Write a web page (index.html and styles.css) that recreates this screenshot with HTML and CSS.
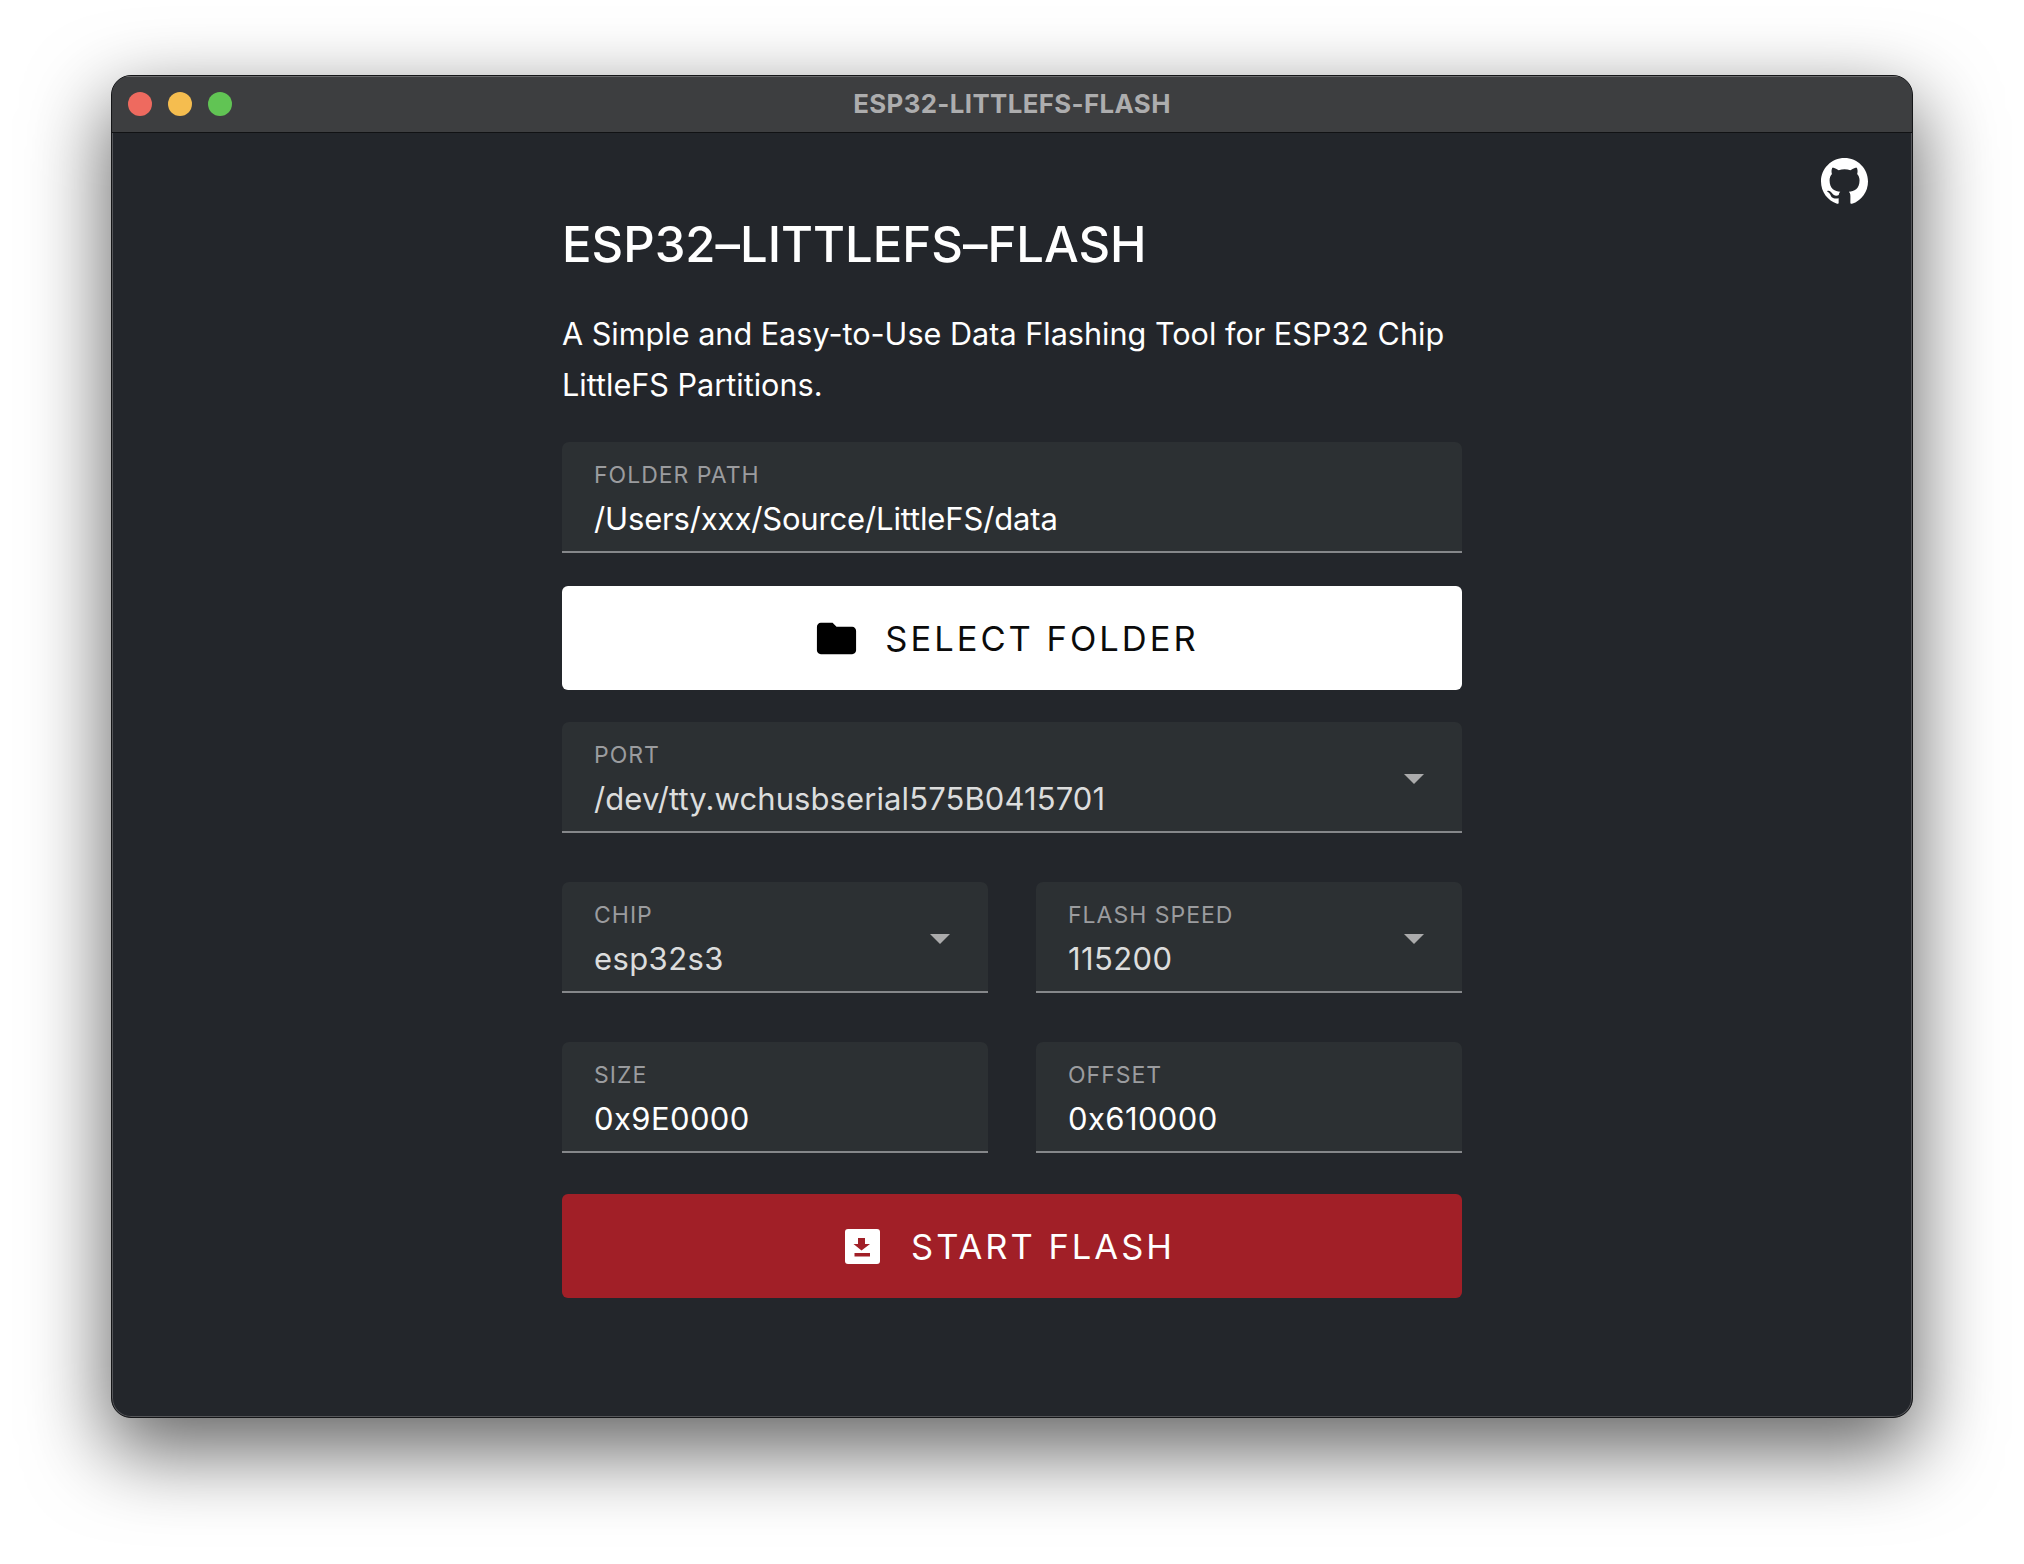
FILE: index.html
```html
<!DOCTYPE html>
<html lang="en">
<head>
    <meta charset="UTF-8">
    <meta name="viewport" content="width=device-width, initial-scale=1.0">
    <title>ESP32-LITTLEFS-FLASH</title>
    <link rel="stylesheet" href="styles.css">
</head>
<body>

    <div class="window">
        <div class="titlebar">
            <div class="lights">
                <span class="light red"></span>
                <span class="light yellow"></span>
                <span class="light green"></span>
            </div>
            <div class="window-title">ESP32-LITTLEFS-FLASH</div>
        </div>

        <div class="content">
            <a class="github" href="#">
                <svg viewBox="0 0 16 16" width="47" height="47" fill="#fff">
                    <path fill-rule="evenodd" d="M8 0C3.58 0 0 3.58 0 8c0 3.54 2.29 6.53 5.47 7.59.4.07.55-.17.55-.38 0-.19-.01-.82-.01-1.49-2.01.37-2.53-.49-2.69-.94-.09-.23-.48-.94-.82-1.13-.28-.15-.68-.52-.01-.53.63-.01 1.08.58 1.23.82.72 1.21 1.87.87 2.33.66.07-.52.28-.87.51-1.07-1.78-.2-3.64-.89-3.64-3.95 0-.87.31-1.59.82-2.15-.08-.2-.36-1.02.08-2.12 0 0 .67-.21 2.2.82.64-.18 1.32-.27 2-.27.68 0 1.36.09 2 .27 1.53-1.04 2.2-.82 2.2-.82.44 1.1.16 1.92.08 2.12.51.56.82 1.27.82 2.15 0 3.07-1.87 3.75-3.65 3.95.29.25.54.73.54 1.48 0 1.07-.01 1.93-.01 2.2 0 .21.15.46.55.38A8.013 8.013 0 0016 8c0-4.42-3.58-8-8-8z"/>
                </svg>
            </a>

            <div class="form">
                <h1>ESP32–LITTLEFS–FLASH</h1>
                <p class="intro">A Simple and Easy-to-Use Data Flashing Tool for ESP32 Chip LittleFS Partitions.</p>

                <div class="field folder">
                    <label>Folder Path</label>
                    <div class="value">/Users/xxx/Source/LittleFS/data</div>
                </div>

                <button class="btn btn-white">
                    <svg viewBox="0 0 24 24" width="47" height="47" fill="#000">
                        <path d="M10 4H4c-1.1 0-1.99.9-1.99 2L2 18c0 1.1.9 2 2 2h16c1.1 0 2-.9 2-2V8c0-1.1-.9-2-2-2h-8l-2-2z"/>
                    </svg>
                    Select Folder
                </button>

                <div class="field port select">
                    <label>Port</label>
                    <div class="value">/dev/tty.wchusbserial575B0415701</div>
                </div>

                <div class="row">
                    <div class="field select">
                        <label>Chip</label>
                        <div class="value">esp32s3</div>
                    </div>
                    <div class="field select">
                        <label>Flash Speed</label>
                        <div class="value">115200</div>
                    </div>
                </div>

                <div class="row">
                    <div class="field">
                        <label>Size</label>
                        <div class="value">0x9E0000</div>
                    </div>
                    <div class="field">
                        <label>Offset</label>
                        <div class="value">0x610000</div>
                    </div>
                </div>

                <button class="btn btn-red">
                    <svg viewBox="0 0 35 35" width="35" height="35">
                        <rect width="35" height="35" rx="3" fill="#fff"/>
                        <path d="M13 9h7v6h5l-8.500 6.500L8.500 15H13z" fill="#a11f27"/>
                        <rect x="9.500" y="24" width="15.500" height="3.500" fill="#a11f27"/>
                    </svg>
                    Start Flash
                </button>
            </div>
        </div>
    </div>

</body>
</html>
```

FILE: styles.css
```css
* {
    margin: 0;
    padding: 0;
    box-sizing: border-box;
    font-family: 'Inter', 'Liberation Sans', sans-serif;
}

body {
    width: 2024px;
    height: 1564px;
    padding: 75px 111px 0 111px;
    background: #fff;
    overflow: hidden;
}

.window {
    height: 1343px;
    border: 1px solid #151618;
    border-radius: 20px;
    background: #23262b;
    box-shadow: inset 0 0 0 1px #55565a, 0 30px 80px 4px rgba(0, 0, 0, 0.6);
    overflow: hidden;
}

.titlebar {
    display: flex;
    align-items: center;
    height: 57px;
    padding: 0 0 0 16px;
    background: #3d3e40;
    border-bottom: 1px solid #111214;
    box-shadow: inset 0 1px 0 #6a6a6c;
}

.lights {
    display: flex;
    gap: 16px;
}

.light {
    width: 24px;
    height: 24px;
    border-radius: 50%;
}

.red {
    background: #ee6a5f;
}

.yellow {
    background: #f5bd4f;
}

.green {
    background: #61c454;
}

.window-title {
    flex: 1;
    margin: -2px 0 0 -120px;
    text-align: center;
    color: #adadae;
    font-size: 25.800px;
    font-weight: 700;
    letter-spacing: 0.400px;
}

.content {
    position: relative;
    display: flex;
    justify-content: center;
}

.github {
    position: absolute;
    top: 25px;
    right: 44px;
}

.form {
    width: 900px;
}

h1 {
    margin-top: 84px;
    color: #fff;
    font-size: 49px;
    font-weight: 500;
    font-feature-settings: "calt" 0;
    line-height: 56px;
}

.intro {
    margin-top: 35px;
    color: #fff;
    font-size: 30.600px;
    line-height: 51px;
}

.field {
    position: relative;
    flex: 1;
    height: 111px;
    margin-top: 32px;
    padding: 20px 32px 0;
    background: #2c3033;
    border-bottom: 2px solid #85878a;
    border-radius: 7px 7px 0 0;
}

label {
    display: block;
    color: #9b9c9f;
    font-size: 23px;
    letter-spacing: 1px;
    line-height: 27px;
    text-transform: uppercase;
}

.value {
    margin-top: 10px;
    color: #fff;
    font-size: 31px;
    letter-spacing: 0.100px;
    line-height: 40px;
}

.select .value {
    color: #dcdddd;
}

.folder .value {
    letter-spacing: -0.150px;
}

.row .value {
    letter-spacing: 0.400px;
}

.select::after {
    content: "";
    position: absolute;
    top: 52px;
    right: 38px;
    border-left: 10px solid transparent;
    border-right: 10px solid transparent;
    border-top: 10px solid #ababac;
}

.row {
    display: flex;
    gap: 48px;
    margin-top: 49px;
}

.row .field {
    margin-top: 0;
}

.btn {
    display: flex;
    align-items: center;
    justify-content: center;
    gap: 26px;
    width: 100%;
    height: 104px;
    margin-top: 33px;
    border: none;
    border-radius: 6px;
    font-size: 34.500px;
    font-weight: 400;
    letter-spacing: 3px;
    text-transform: uppercase;
}

.btn-white {
    gap: 25px;
    padding-right: 12px;
    background: #fff;
    color: #0b0b0b;
}

.btn-red {
    margin-top: 41px;
    padding-right: 4px;
    background: #a11f27;
    color: #fff;
}

.btn-red svg {
    margin-right: 5px;
}
```
